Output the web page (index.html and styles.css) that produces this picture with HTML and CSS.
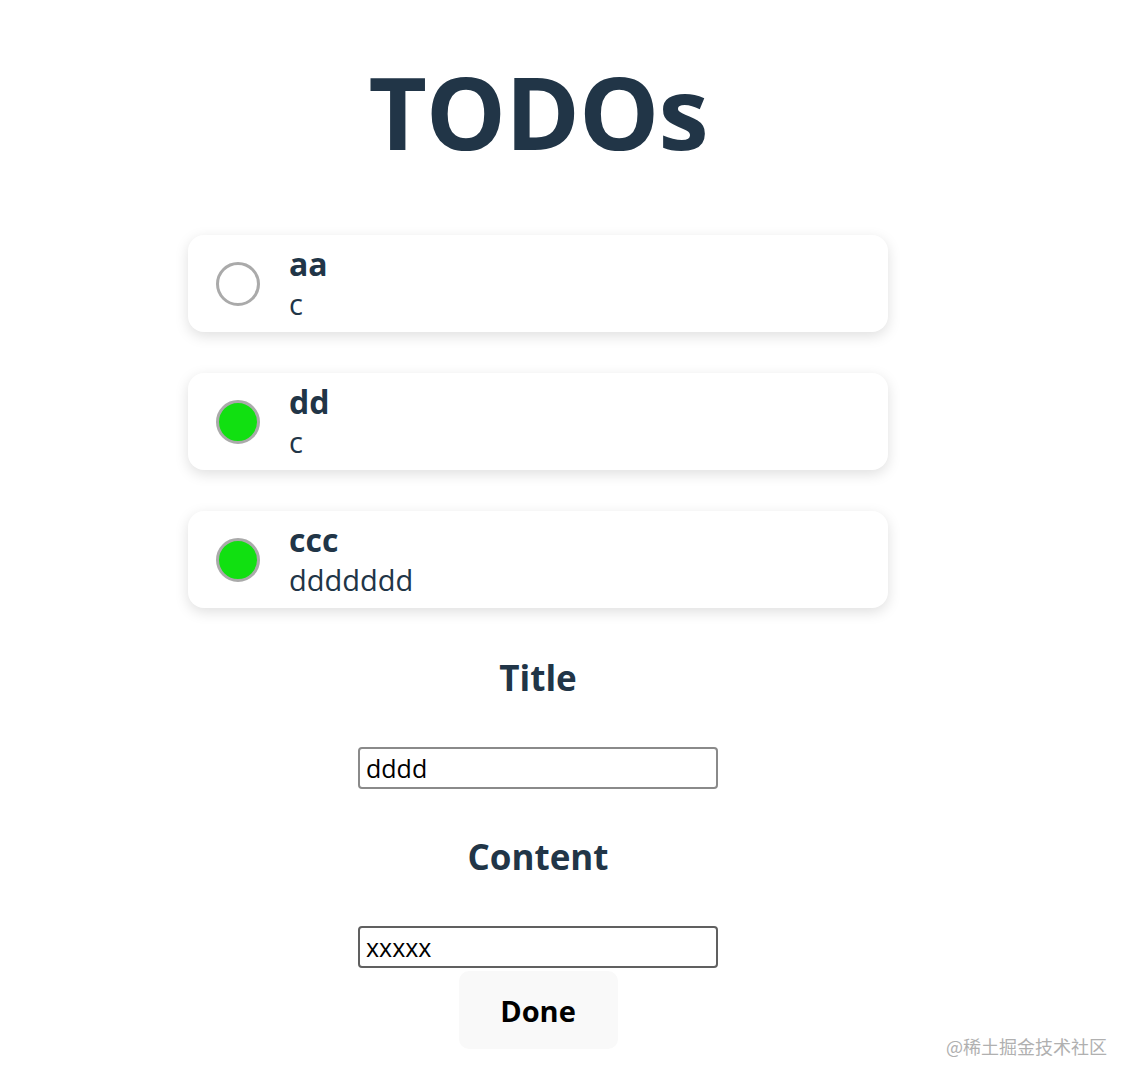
FILE: index.html
```html
<!DOCTYPE html>
<html lang="en">
<head>
<meta charset="utf-8">
<title>TODOs</title>
<link rel="stylesheet" href="styles.css">
</head>
<body>
<div class="app">
  <h1 class="page-title">TODOs</h1>
  <ul class="todo-list">
    <li class="todo-card">
      <span class="check"></span>
      <div class="todo-text">
        <div class="todo-title">aa</div>
        <div class="todo-content">c</div>
      </div>
    </li>
    <li class="todo-card">
      <span class="check done"></span>
      <div class="todo-text">
        <div class="todo-title">dd</div>
        <div class="todo-content">c</div>
      </div>
    </li>
    <li class="todo-card">
      <span class="check done"></span>
      <div class="todo-text">
        <div class="todo-title">ccc</div>
        <div class="todo-content">ddddddd</div>
      </div>
    </li>
  </ul>
  <form class="todo-form">
    <h2 class="field-label">Title</h2>
    <input class="field-input" type="text" value="dddd">
    <h2 class="field-label">Content</h2>
    <input class="field-input active" type="text" value="xxxxx">
    <button class="done-btn" type="button">Done</button>
  </form>
</div>
<div class="watermark">@稀土掘金技术社区</div>
</body>
</html>
```
FILE: styles.css
```css
html, body {
  margin: 0;
  padding: 0;
  background: #fff;
}
body {
  font-family: "Open Sans", "Noto Sans", sans-serif;
  color: #213547;
  position: relative;
  min-height: 1085px;
}
.app {
  width: 700px;
  margin: 0 0 0 188px;
  padding-top: 46px;
  display: flex;
  flex-direction: column;
  align-items: center;
}
.page-title {
  margin: 0;
  font-size: 101px;
  line-height: 130px;
  font-weight: 700;
  letter-spacing: -1px;
}
.todo-list {
  list-style: none;
  margin: 59px 0 0;
  padding: 0;
  width: 700px;
  display: flex;
  flex-direction: column;
  gap: 41px;
}
.todo-card {
  height: 97px;
  box-sizing: border-box;
  border-radius: 16px;
  background: #fff;
  box-shadow: 0 4px 14px rgba(0, 0, 0, 0.13);
  display: flex;
  align-items: center;
  padding-left: 28px;
  gap: 29px;
}
.check {
  width: 44px;
  height: 44px;
  box-sizing: border-box;
  border: 3px solid #aaaaaa;
  border-radius: 50%;
  flex: none;
}
.check.done {
  background: #11e011;
}
.todo-text {
  display: flex;
  flex-direction: column;
  padding-top: 2px;
}
.todo-title {
  font-size: 32px;
  font-weight: 700;
  line-height: 38px;
}
.todo-content {
  font-size: 29px;
  line-height: 42px;
}
.todo-form {
  display: flex;
  flex-direction: column;
  align-items: center;
  margin-top: 42px;
}
.field-label {
  margin: 0;
  font-size: 35px;
  line-height: 56px;
  font-weight: 700;
}
.field-label + .field-input {
  margin-top: 41px;
}
.field-input + .field-label {
  margin-top: 40px;
}
.field-input {
  width: 360px;
  height: 42px;
  box-sizing: border-box;
  border: 2px solid #8a8a8a;
  border-radius: 4px;
  padding: 0 6px;
  font-family: "Open Sans", "Noto Sans", sans-serif;
  font-size: 25px;
  color: #000;
  outline: none;
}
.field-input.active {
  border-color: #606060;
}
.done-btn {
  margin-top: 3px;
  width: 159px;
  height: 78px;
  border: none;
  border-radius: 10px;
  background: #f9f9f9;
  font-family: "Open Sans", "Noto Sans", sans-serif;
  font-size: 29px;
  font-weight: 700;
  color: #000;
}
.watermark {
  position: absolute;
  right: 28px;
  top: 1033px;
  font-family: "Noto Sans CJK SC", sans-serif;
  font-size: 18px;
  color: #b0b0b0;
}
```
